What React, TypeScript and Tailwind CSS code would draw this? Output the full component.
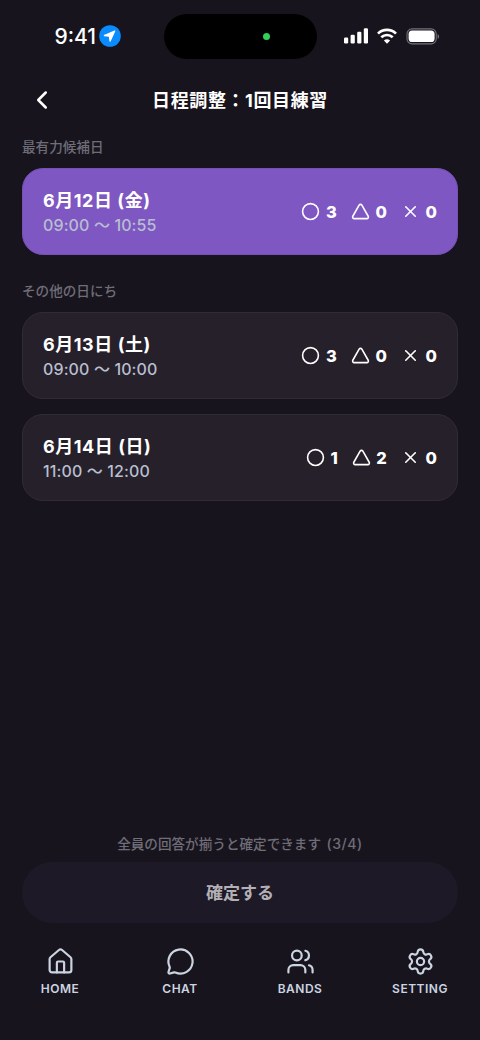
import { ChevronLeft, Circle, House, MessageCircle, Settings, Triangle, Users, X } from 'lucide-react';
import type { LucideIcon } from 'lucide-react';

type Candidate = {
  id: number;
  date: string;
  time: string;
  ok: number;
  maybe: number;
  ng: number;
};

const best: Candidate = { id: 1, date: '6月12日 (金)', time: '09:00 〜 10:55', ok: 3, maybe: 0, ng: 0 };

const others: Candidate[] = [
  { id: 2, date: '6月13日 (土)', time: '09:00 〜 10:00', ok: 3, maybe: 0, ng: 0 },
  { id: 3, date: '6月14日 (日)', time: '11:00 〜 12:00', ok: 1, maybe: 2, ng: 0 },
];

const tabs: { label: string; icon: LucideIcon }[] = [
  { label: 'HOME', icon: House },
  { label: 'CHAT', icon: MessageCircle },
  { label: 'BANDS', icon: Users },
  { label: 'SETTING', icon: Settings },
];

function StatusBar() {
  return (
    <div className="flex h-[72px] items-center">
      <div className="flex w-[164px] items-center pl-[54.5px]">
        <span className="w-[42px] pt-px text-[21px] leading-6 font-medium text-white">9:41</span>
        <svg className="ml-[2px] shrink-0" width="22" height="22" viewBox="0 0 22 22">
          <circle cx="11" cy="11" r="10.8" fill="#0a8cff" />
          <path
            d="M15.6 6.2 5.4 10.5l5 .7.7 4.9Z"
            fill="#fff"
            stroke="#fff"
            strokeWidth="1.3"
            strokeLinejoin="round"
          />
        </svg>
      </div>
      <div className="flex h-[45px] w-[153px] items-center rounded-full bg-black pl-[98.5px]">
        <span className="size-[7px] rounded-full bg-[#30d158]" />
      </div>
      <div className="flex items-center pl-[27px]">
        <svg width="24" height="16" viewBox="0 0 24 16" fill="#fff">
          <rect x="0" y="9.5" width="4.2" height="6" rx="1.2" />
          <rect x="6.6" y="6.8" width="4.2" height="8.7" rx="1.2" />
          <rect x="13.2" y="3.7" width="4.2" height="11.8" rx="1.2" />
          <rect x="19.8" y="0.3" width="4.2" height="15.2" rx="1.2" />
        </svg>
        <svg className="ml-[9px]" width="20" height="16" viewBox="0 0 20 16" fill="none" stroke="#fff" strokeWidth="2.7">
          <path d="M1 5.6a12.9 12.9 0 0 1 18 0" />
          <path d="M4.3 9.3a8.2 8.2 0 0 1 11.4 0" />
          <path d="M10 15.7 6.9 12.6a4.6 4.6 0 0 1 6.2 0Z" fill="#fff" stroke="none" />
        </svg>
        <svg className="ml-[8.5px]" width="34" height="17" viewBox="0 0 34 17">
          <rect x="1" y="0.9" width="29.2" height="15" rx="5" fill="none" stroke="#74717a" strokeWidth="1.1" />
          <rect x="2.6" y="2.6" width="26" height="11.4" rx="3.6" fill="#fff" />
          <path d="M31.6 6v5c.9-.4 1.5-1.4 1.5-2.5S32.5 6.4 31.6 6Z" fill="#74717a" />
        </svg>
      </div>
    </div>
  );
}

function Count({ icon: Icon, value }: { icon: LucideIcon; value: number }) {
  return (
    <div className="flex items-center gap-[5.5px]">
      <Icon size={19} strokeWidth={2} />
      <span className="text-[16.5px] leading-6 font-extrabold">{value}</span>
    </div>
  );
}

function CandidateCard({ item, highlighted = false }: { item: Candidate; highlighted?: boolean }) {
  return (
    <button
      className={`flex h-[87px] w-full items-center justify-between rounded-[21px] border pr-5 pl-5 text-left text-white ${
        highlighted ? 'border-[#7650b3] bg-[#7e57c2]' : 'border-[#302b38] bg-[#26202b]'
      }`}
    >
      <div className="pt-[3px]">
        <p className="text-[18px] leading-6 font-bold tracking-[0.55px] whitespace-pre">{item.date}</p>
        <p className="text-[16px] leading-6 font-medium tracking-[0.12px] whitespace-pre text-[#b8bfcf]">{item.time}</p>
      </div>
      <div className="flex items-center gap-[14.2px]">
        <Count icon={Circle} value={item.ok} />
        <Count icon={Triangle} value={item.maybe} />
        <Count icon={X} value={item.ng} />
      </div>
    </button>
  );
}

export default function App() {
  return (
    <div className="flex h-[1040px] w-[480px] flex-col bg-[#18141d] font-['Inter','Noto_Sans_CJK_JP',sans-serif]" lang="ja">
      <StatusBar />

      <header className="flex h-14 items-center px-[27px]">
        <button className="w-[30px] text-white" aria-label="戻る">
          <ChevronLeft size={30} strokeWidth={2} />
        </button>
        <h1 className="flex-1 pt-[2px] text-center text-[18px] leading-7 font-bold tracking-[0.6px] text-white">
          日程調整：1回目練習
        </h1>
        <div className="w-[30px]" />
      </header>

      <main className="flex flex-1 flex-col px-[22px]">
        <h2 className="mt-2 text-[13.6px] leading-[22px] font-medium text-[#6f6d78]">最有力候補日</h2>
        <div className="mt-[10px]">
          <CandidateCard item={best} highlighted />
        </div>

        <h2 className="mt-[25px] text-[13.6px] leading-[22px] font-medium text-[#6f6d78]">その他の日にち</h2>
        <div className="mt-[10px] flex flex-col gap-[15px]">
          {others.map((item) => (
            <CandidateCard key={item.id} item={item} />
          ))}
        </div>

        <div className="mt-auto">
          <p className="text-center text-[13.6px] leading-[22px] font-medium text-[#6f6d78]">
            全員の回答が揃うと確定できます<span className="ml-px text-[14px] tracking-[0.6px]"> (3/4)</span>
          </p>
          <button className="mt-[7px] h-[61px] w-full rounded-full bg-[#1e1926] pt-[2px] text-[17px] font-bold text-[#b3b0b5]">
            確定する
          </button>
        </div>
      </main>

      <nav className="grid h-[117px] grid-cols-4 pt-[24px]">
        {tabs.map(({ label, icon: Icon }) => (
          <button key={label} className="flex flex-col items-center gap-[4px] self-start text-[#cbd5e1]">
            <Icon size={29} strokeWidth={1.8} />
            <span className="text-[12px] leading-[18px] font-semibold tracking-[0.5px]">{label}</span>
          </button>
        ))}
      </nav>
    </div>
  );
}
